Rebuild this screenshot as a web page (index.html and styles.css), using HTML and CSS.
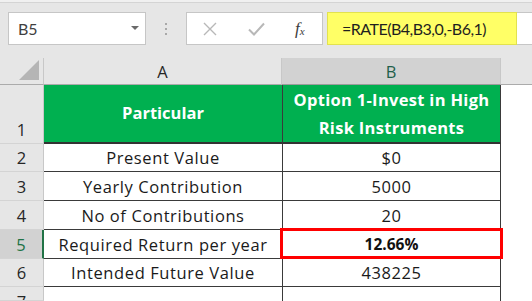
FILE: index.html
```html
<!DOCTYPE html>
<html>
<head>
<meta charset="utf-8">
<link rel="stylesheet" href="styles.css">
</head>
<body>
<div class="app">
  <div class="topline"></div>
  <div class="fbar">
    <div class="namebox"><span>B5</span><span class="caret"></span></div>
    <div class="dots"><i></i><i></i><i></i></div>
    <div class="btnbox">
      <svg class="ico x" width="14" height="14" viewBox="0 0 14 14"><path d="M1 1L13 13M13 1L1 13" stroke="#b8b8b8" stroke-width="1.4" fill="none"/></svg>
      <svg class="ico ok" width="17" height="14" viewBox="0 0 17 14"><path d="M1 7.5L6 12.5L16 1.5" stroke="#b8b8b8" stroke-width="2" fill="none"/></svg>
      <span class="fx">f<sub>x</sub></span>
    </div>
    <div class="formula"><span class="hl">=RATE(B4,B3,0,-B6,1)</span></div>
  </div>
  <div class="sheet">
    <div class="corner"><span class="tri"></span></div>
    <div class="ch">A</div>
    <div class="ch sel">B</div>
    <div class="ch rest"></div>

    <div class="rh tall">1</div>
    <div class="c a head">Particular</div>
    <div class="c b head">Option 1-Invest in High<br>Risk Instruments</div>
    <div class="c r"></div>

    <div class="rh">2</div>
    <div class="c a">Present Value</div>
    <div class="c b">$0</div>
    <div class="c r"></div>

    <div class="rh">3</div>
    <div class="c a">Yearly Contribution</div>
    <div class="c b">5000</div>
    <div class="c r"></div>

    <div class="rh">4</div>
    <div class="c a">No of Contributions</div>
    <div class="c b">20</div>
    <div class="c r"></div>

    <div class="rh selrow">5</div>
    <div class="c a">Required Return per year</div>
    <div class="c b active"><b>12.66%</b><span class="redbox"></span></div>
    <div class="c r"></div>

    <div class="rh">6</div>
    <div class="c a">Intended Future Value</div>
    <div class="c b">438225</div>
    <div class="c r"></div>

    <div class="rh last">7</div>
    <div class="c a blank"></div>
    <div class="c b blank"></div>
    <div class="c r"></div>
  </div>
</div>
</body>
</html>
```

FILE: styles.css
```css
* { box-sizing: border-box; }
html, body { margin: 0; padding: 0; }
body {
  width: 532px; height: 301px; overflow: hidden;
  background: #ffffff;
  font-family: "Open Sans", Lato, "Liberation Sans", sans-serif;
}
.app { width: 532px; height: 301px; background: #e6e6e6; }
.topline { height: 3px; background: #f0f0f0; border-bottom: 1px solid #d4d4d4; }

.fbar {
  display: flex; align-items: stretch;
  height: 33px; margin-top: 9px; padding-left: 8px;
}
.namebox {
  width: 138px; background: #fff; border: 1px solid #c6c6c6;
  display: flex; align-items: center; justify-content: space-between;
  padding: 0 6px 0 9px; font-size: 16px; color: #3f3f3f;
  font-family: Lato, sans-serif;
}
.caret {
  width: 0; height: 0;
  border-left: 4px solid transparent; border-right: 4px solid transparent;
  border-top: 4px solid #6a6a6a; margin-bottom: 2px;
}
.dots {
  width: 40px; display: flex; flex-direction: column;
  align-items: center; justify-content: center; gap: 3px;
}
.dots i { display: block; width: 2px; height: 2px; background: #a8a8a8; }
.btnbox {
  width: 137px; background: #fff; border: 1px solid #c6c6c6;
  display: flex; align-items: center; padding-left: 16px;
}
.ico { display: block; }
.x { margin-right: 31px; }
.ok { margin-right: 30px; }
.fx {
  font-family: "Liberation Serif", serif; font-style: italic;
  font-size: 17px; color: #3c3c3c;
}
.fx sub { font-size: 11px; vertical-align: -1px; }
.formula {
  flex: 1; margin-left: 4px; background: #fff; border: 1px solid #c6c6c6;
  border-right: none; display: flex;
}
.hl {
  width: 190px; margin: -1px 0 -1px -1px; background: #ffff66;
  border: 1px solid #e2e24e;
  display: flex; align-items: center; padding-left: 14px;
  font-size: 16px; letter-spacing: -0.5px; color: #1f1f1f; font-family: Lato, sans-serif;
}

.sheet {
  margin-top: 13px;
  display: grid;
  grid-template-columns: 44px 238px 219px 31px;
  grid-template-rows: 27px 59px 28px 29px 29px 29px 28px 14px;
  background: #fff;
}
.corner {
  background: #e6e6e6; border-right: 1px solid #c8c8c8; border-bottom: 1px solid #ababab;
  position: relative;
}
.tri {
  position: absolute; right: 4px; bottom: 4px; width: 0; height: 0;
  border-left: 20px solid transparent; border-bottom: 20px solid #b5b5b5;
}
.ch {
  background: #e6e6e6; border-right: 1px solid #c8c8c8; border-bottom: 1px solid #ababab;
  display: flex; align-items: center; justify-content: center;
  font-size: 16.5px; color: #262626;
}
.ch.sel { background: #d2d2d2; color: #1f5f4a; border-bottom: 1px solid #9c9c9c; }
.ch.rest { border-right: none; }

.rh {
  background: #e6e6e6; border-right: 1px solid #c8c8c8; border-bottom: 1px solid #d4d4d4;
  display: flex; align-items: center; justify-content: center;
  font-size: 16.5px; color: #262626;
}
.rh.tall { align-items: flex-end; padding-bottom: 2px; }
.rh.selrow { background: #d2d2d2; color: #217346; border-right: 2px solid #217346; }
.rh.last { align-items: flex-start; padding-top: 3px; overflow: hidden; }

.c {
  display: flex; align-items: center; justify-content: center; text-align: center;
  font-size: 16.5px; letter-spacing: 0.6px; color: #1a1a1a; border-bottom: 1px solid #3a3a3a;
}
.c.b { border-left: 1px solid #3a3a3a; border-right: 1px solid #3a3a3a; }
.c.head {
  background: #00b050; color: #fff; font-weight: bold; line-height: 28px;
  font-size: 16.5px; letter-spacing: 0.3px;
  border-bottom: 2px solid #333;
}
.c.a.head { padding-bottom: 2px; letter-spacing: 0; }
.c.r { border: none; background: #fff; }
.c.blank { border-bottom: none; }
.c.active { position: relative; }
.c.active b { font-weight: bold; font-size: 15.5px; color: #111; letter-spacing: 0; }
.redbox {
  position: absolute; left: -3px; top: -2px; right: -3px; bottom: -1px;
  border: 3px solid #ff0000;
}
```
